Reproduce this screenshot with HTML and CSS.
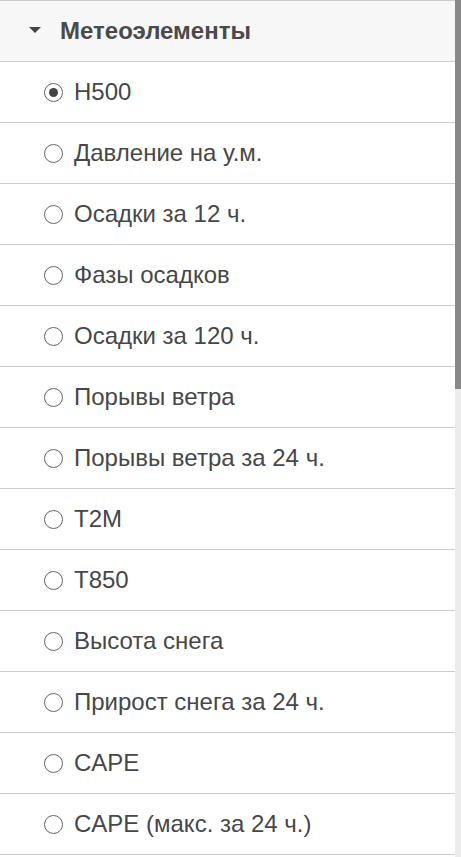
FILE: index.html
```html
<!DOCTYPE html>
<html lang="ru">
	<head>
		<meta charset="UTF-8" />
		<meta name="viewport" content="width=device-width, initial-scale=1.0" />
		<title>Метеоэлементы</title>
		<link rel="stylesheet" href="styles.css">
	</head>
	<body>
		<div class="layout">
			<div class="panel">
				<div class="panel-header">
					<span class="caret"></span>
					<span class="panel-title">Метеоэлементы</span>
				</div>
				<label class="item"><input type="radio" name="elem" checked /><span class="radio"></span>H500</label>
				<label class="item"><input type="radio" name="elem" /><span class="radio"></span>Давление на у.м.</label>
				<label class="item"><input type="radio" name="elem" /><span class="radio"></span>Осадки за 12 ч.</label>
				<label class="item"><input type="radio" name="elem" /><span class="radio"></span>Фазы осадков</label>
				<label class="item"><input type="radio" name="elem" /><span class="radio"></span>Осадки за 120 ч.</label>
				<label class="item"><input type="radio" name="elem" /><span class="radio"></span>Порывы ветра</label>
				<label class="item"><input type="radio" name="elem" /><span class="radio"></span>Порывы ветра за 24 ч.</label>
				<label class="item"><input type="radio" name="elem" /><span class="radio"></span>T2M</label>
				<label class="item"><input type="radio" name="elem" /><span class="radio"></span>T850</label>
				<label class="item"><input type="radio" name="elem" /><span class="radio"></span>Высота снега</label>
				<label class="item"><input type="radio" name="elem" /><span class="radio"></span>Прирост снега за 24 ч.</label>
				<label class="item"><input type="radio" name="elem" /><span class="radio"></span>CAPE</label>
				<label class="item"><input type="radio" name="elem" /><span class="radio"></span>CAPE (макс. за 24 ч.)</label>
			</div>
			<div class="scrollbar"><div class="scrollbar-thumb"></div></div>
		</div>
	</body>
</html>
```
FILE: styles.css
```css
* {
	box-sizing: border-box;
	margin: 0;
	padding: 0;
}
html,
body {
	height: 100%;
	overflow: hidden;
}
body {
	font-family: "Liberation Sans", Arial, sans-serif;
	background-color: #fff;
	color: #444;
}
.layout {
	display: flex;
	height: 100%;
}
.panel {
	flex: 1;
	border-top: 1px solid #ccc;
}
.panel-header {
	display: flex;
	align-items: center;
	height: 61px;
	padding-left: 29px;
	background-color: #f7f7f7;
	border-bottom: 1px solid #ccc;
}
.caret {
	width: 0;
	height: 0;
	border-left: 6px solid transparent;
	border-right: 6px solid transparent;
	border-top: 6px solid #444;
	margin-right: 19px;
	margin-top: -2px;
}
.panel-title {
	font-size: 24px;
	font-weight: bold;
	color: #4a4a4a;
}
.item {
	display: flex;
	align-items: center;
	height: 61px;
	padding-left: 44px;
	border-bottom: 1px solid #ccc;
	font-size: 24px;
	color: #474747;
	cursor: pointer;
}
.item input {
	display: none;
}
.radio {
	width: 19px;
	height: 19px;
	border: 1px solid #666;
	border-radius: 50%;
	margin-right: 11px;
	display: flex;
	align-items: center;
	justify-content: center;
}
.item input:checked + .radio::after {
	content: "";
	width: 9px;
	height: 9px;
	border-radius: 50%;
	background-color: #444;
}
.scrollbar {
	width: 6px;
	background-color: #ececec;
}
.scrollbar-thumb {
	height: 389px;
	background-color: #888;
}
```
